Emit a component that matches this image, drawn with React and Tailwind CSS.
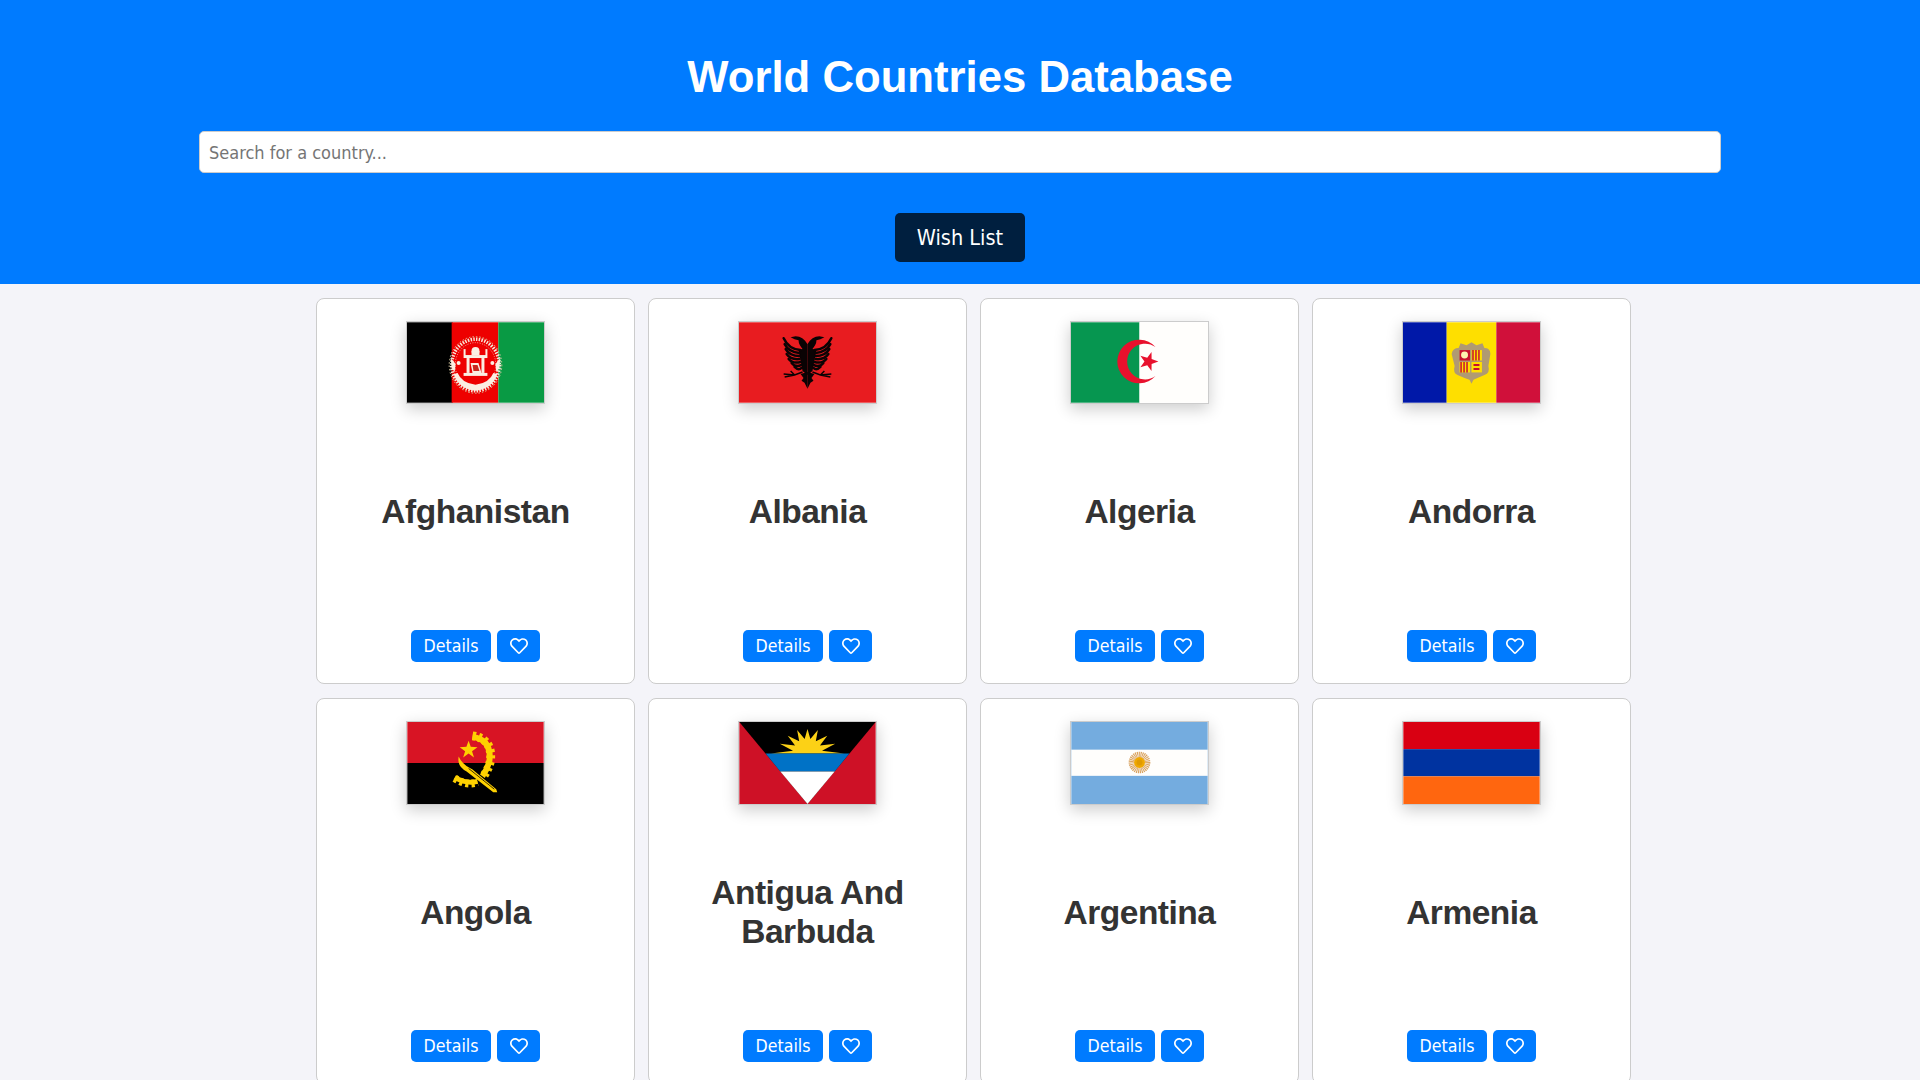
import React from 'react';
import { FaRegHeart } from 'react-icons/fa';

const AfghanistanFlag = () => (
  <svg viewBox="0 0 138 81" className="block w-full h-full">
    <rect width="46" height="81" fill="#000" />
    <rect x="45" width="47" height="81" fill="#ee0000" />
    <rect x="92" width="46" height="81" fill="#099a44" />
    <g fill="none">
      <ellipse cx="69" cy="43" rx="24" ry="26" stroke="#f8e6d8" strokeWidth="3.500" strokeDasharray="1.500 1.300" />
      <ellipse cx="69" cy="43" rx="20.500" ry="22.500" stroke="#f8e6d8" strokeWidth="0.700" strokeDasharray="1 1.500" />
      <ellipse cx="69" cy="43" rx="26.500" ry="28.500" stroke="#d8c8a0" strokeWidth="1" strokeDasharray="1.500 2" />
    </g>
    <g fill="#fbeee2">
      <rect x="58" y="33" width="22" height="3" />
      <rect x="60" y="36" width="3" height="15" />
      <rect x="75" y="36" width="3" height="15" />
      <circle cx="69" cy="29" r="4" />
      <rect x="65" y="29" width="8" height="4" />
      <rect x="57" y="27" width="2" height="9" />
      <rect x="79" y="27" width="2" height="9" />
      <path d="M64 41 L72 41 L75 51 L66 51 Z" />
      <rect x="57" y="51" width="24" height="3" />
      <path d="M47 52 Q52 67 69 69 Q86 67 91 52 L87 51 Q83 61 69 63 Q55 61 51 51 Z" />
      <circle cx="52" cy="41" r="2" />
      <circle cx="86" cy="41" r="2" />
      <path d="M44 36 L49 42 L48 50 L45 46 Z" />
      <path d="M94 36 L89 42 L90 50 L93 46 Z" />
    </g>
    <path d="M66 43 h5 l2 6 h-6 z" fill="#c9281e" />
  </svg>
);

const EagleHalf = () => (
  <g>
    <path d="M69 22 C66 17 62 14 57 14 L52 15 L56 17 L60 18 C60 22 62 24 64 27 L60 28 L64 49 L69 53 Z" fill="#0a0304" />
    <path d="M69 50 L62 52 L65 56 L63 59 L66 61 L69 67 Z" fill="#0a0304" />
    <g fill="none" stroke="#0a0304" strokeWidth="2.500" strokeLinecap="round">
      <path d="M62 28 Q50 27 45 16" />
      <path d="M61 31 Q50 30 46 22" />
      <path d="M61 34 Q51 34 47 27" />
      <path d="M61 37 Q52 38 48 32" />
      <path d="M62 40 Q54 42 50 37" />
      <path d="M63 43 Q57 46 53 41" />
      <path d="M63 46 Q60 49 56 45" />
    </g>
    <path d="M64 50 L56 53 L45 52 M56 53 L46 55 M56 53 L52 49" fill="none" stroke="#0a0304" strokeWidth="1.500" />
  </g>
);

const AlbaniaFlag = () => (
  <svg viewBox="0 0 138 81" className="block w-full h-full">
    <rect width="138" height="81" fill="#e81c20" />
    <EagleHalf />
    <g transform="matrix(-1 0 0 1 138 0)">
      <EagleHalf />
    </g>
  </svg>
);

const AlgeriaFlag = () => (
  <svg viewBox="0 0 138 81" className="block w-full h-full">
    <rect width="69" height="81" fill="#069650" />
    <rect x="69" width="69" height="81" fill="#fffefc" />
    <path d="M85.100 24.900 A22 22 0 1 0 85.100 54.100 A18 18 0 1 1 85.100 24.900 Z" fill="#e8112d" />
    <path d="M88 39.500 L81.200 41.900 L81.100 49 L76.800 43.300 L69.900 45.400 L74 39.500 L69.900 33.600 L76.800 35.700 L81.100 30 L81.200 37.100 Z" fill="#e8112d" />
  </svg>
);

const AndorraFlag = () => (
  <svg viewBox="0 0 138 81" className="block w-full h-full">
    <rect width="44" height="81" fill="#0018a8" />
    <rect x="44" width="50" height="81" fill="#fedf00" />
    <rect x="94" width="44" height="81" fill="#d0103a" />
    <path d="M49 32 Q50 26 56 26 L58 21 L64 23 L69 20 L74 23 L80 21 L82 26 Q88 26 88 32 L86 44 Q88 51 82 53 L75 56 L71 58 L69 62 L67 58 L62 56 L55 53 Q50 51 52 44 Z" fill="#b09a72" />
    <rect x="57" y="28" width="10.500" height="10.500" fill="#c8102e" />
    <circle cx="62" cy="33" r="3.500" fill="#fdf0b0" />
    <rect x="69" y="28" width="10.500" height="10.500" fill="#fedf00" />
    <path d="M70.500 28v10.500M73.500 28v10.500M76.500 28v10.500" stroke="#c8102e" strokeWidth="1.500" />
    <rect x="57" y="40" width="10.500" height="10.500" fill="#fedf00" />
    <path d="M58.500 40v10.500M61.500 40v10.500M64.500 40v10.500" stroke="#c8102e" strokeWidth="1.500" />
    <rect x="69" y="40" width="10.500" height="10.500" fill="#fedf00" />
    <path d="M71 42h6v2h-6zM71 46h6v2h-6z" fill="#c8102e" />
  </svg>
);

const AngolaFlag = () => (
  <svg viewBox="0 0 138 83" className="block w-full h-full">
    <rect width="138" height="41.500" fill="#d81424" />
    <rect y="41.500" width="138" height="41.500" fill="#000" />
    <g fill="none" stroke="#fed100">
      <path d="M66 15 Q86 18 83 40 Q81 48 76 55" strokeWidth="6" />
      <path d="M66 14 Q87 17 84 40 Q82 48 77 55" strokeWidth="9" strokeDasharray="3 3" />
      <path d="M48 56 Q60 63 71 60" strokeWidth="5" />
      <path d="M48 57 Q60 65 71 61" strokeWidth="8" strokeDasharray="3 3" />
    </g>
    <path d="M62 19 L64.200 25 L71 25.500 L65.500 29.500 L67.500 36 L62 32 L56.500 36 L58.500 29.500 L53 25.500 L59.800 25 Z" fill="#fed100" />
    <path d="M52 35 Q50 45 60 50 L87 71 L91 71 L90 68 L66 48 Q55 43 52 35 Z" fill="#fed100" />
    <path d="M62 47 L88 68" stroke="#3a2a00" strokeWidth="1" />
  </svg>
);

const AntiguaFlag = () => (
  <svg viewBox="0 0 138 83" className="block w-full h-full">
    <rect width="138" height="83" fill="#ce1126" />
    <path d="M0 0 H138 L69 83 Z" fill="#000" />
    <path
      d="M32 32 L54.300 29.100 L41 22 L56.400 23.800 L49 14 L60.600 19.600 L58.500 8 L66.100 17.300 L69 7 L71.900 17.300 L79.500 8 L77.400 19.600 L89 14 L81.600 23.800 L97 22 L83.700 29.100 L106 32 Z"
      fill="#fcd116"
    />
    <path d="M26.600 32 H111.400 L96.500 50 H41.500 Z" fill="#0072c6" />
    <path d="M41.500 50 H96.500 L69 83 Z" fill="#fff" />
  </svg>
);

const ArgentinaFlag = () => (
  <svg viewBox="0 0 138 83" className="block w-full h-full">
    <rect width="138" height="83" fill="#74acdf" />
    <rect y="28" width="138" height="26.500" fill="#fffefc" />
    <circle cx="69" cy="41" r="8" fill="none" stroke="#d9a25f" strokeWidth="6" strokeDasharray="1 0.600" />
    <circle cx="69" cy="41" r="5.500" fill="#f0a800" />
    <circle cx="69" cy="41" r="3" fill="#e09a00" />
  </svg>
);

const ArmeniaFlag = () => (
  <svg viewBox="0 0 138 83" className="block w-full h-full">
    <rect width="138" height="27.500" fill="#d90012" />
    <rect y="27.500" width="138" height="27.500" fill="#0033a0" />
    <rect y="55" width="138" height="28" fill="#ff660f" />
  </svg>
);

const countries = [
  { name: 'Afghanistan', flag: <AfghanistanFlag /> },
  { name: 'Albania', flag: <AlbaniaFlag /> },
  { name: 'Algeria', flag: <AlgeriaFlag /> },
  { name: 'Andorra', flag: <AndorraFlag /> },
  { name: 'Angola', flag: <AngolaFlag />, tall: true },
  { name: 'Antigua And Barbuda', flag: <AntiguaFlag />, tall: true },
  { name: 'Argentina', flag: <ArgentinaFlag />, tall: true },
  { name: 'Armenia', flag: <ArmeniaFlag />, tall: true },
];

const CountryCard = ({ country }) => (
  <div className="w-[319px] h-[386px] bg-white border border-[#ccc] rounded-[8px] flex flex-col items-center pt-[22px] pb-[21px] px-[20px]">
    <div className={`w-[139px] border border-[#ccc] shadow-[0_5px_15px_rgba(0,0,0,0.2)] ${country.tall ? 'h-[84px]' : 'h-[83px]'}`}>
      {country.flag}
    </div>
    <h2 className="flex-1 flex items-center justify-center text-center text-[#333] font-bold text-[33.5px] tracking-[-0.48px] leading-[39px] mb-[11px]">
      {country.name}
    </h2>
    <div className="flex gap-[6px] font-['DejaVu_Sans_Condensed','DejaVu_Sans',sans-serif]">
      <button className="w-[80px] h-[32px] pt-[1px] bg-[#007bff] text-white text-[17.6px] rounded-[5px]">Details</button>
      <button className="w-[43px] h-[32px] bg-[#007bff] text-white rounded-[5px] flex items-center justify-center">
        <FaRegHeart size={18} />
      </button>
    </div>
  </div>
);

const App = () => {
  return (
    <div className="min-h-screen bg-[#f4f4f9] font-['Liberation_Sans',sans-serif]">
      <header className="h-[284px] bg-[#007bff] flex flex-col items-center pt-[51px]">
        <h1 className="text-white font-bold text-[43.7px] leading-[51px] text-center">World Countries Database</h1>
        <input
          type="text"
          placeholder="Search for a country..."
          className="mt-[29px] w-[1522px] h-[42px] bg-white border border-[#ccc] rounded-[5px] px-[9px] text-[18px] font-['DejaVu_Sans_Condensed','DejaVu_Sans',sans-serif] placeholder:text-[#757575]"
        />
        <button className="mt-[40px] w-[130px] h-[49px] pt-[2px] bg-[#001f3f] text-white text-[21.5px] rounded-[5px] font-['DejaVu_Sans_Condensed','DejaVu_Sans',sans-serif]">
          Wish List
        </button>
      </header>
      <main className="flex flex-wrap gap-x-[13px] gap-y-[14px] pt-[14px] w-[1332px] ml-[316px]">
        {countries.map((country) => (
          <CountryCard key={country.name} country={country} />
        ))}
      </main>
    </div>
  );
};

export default App;
